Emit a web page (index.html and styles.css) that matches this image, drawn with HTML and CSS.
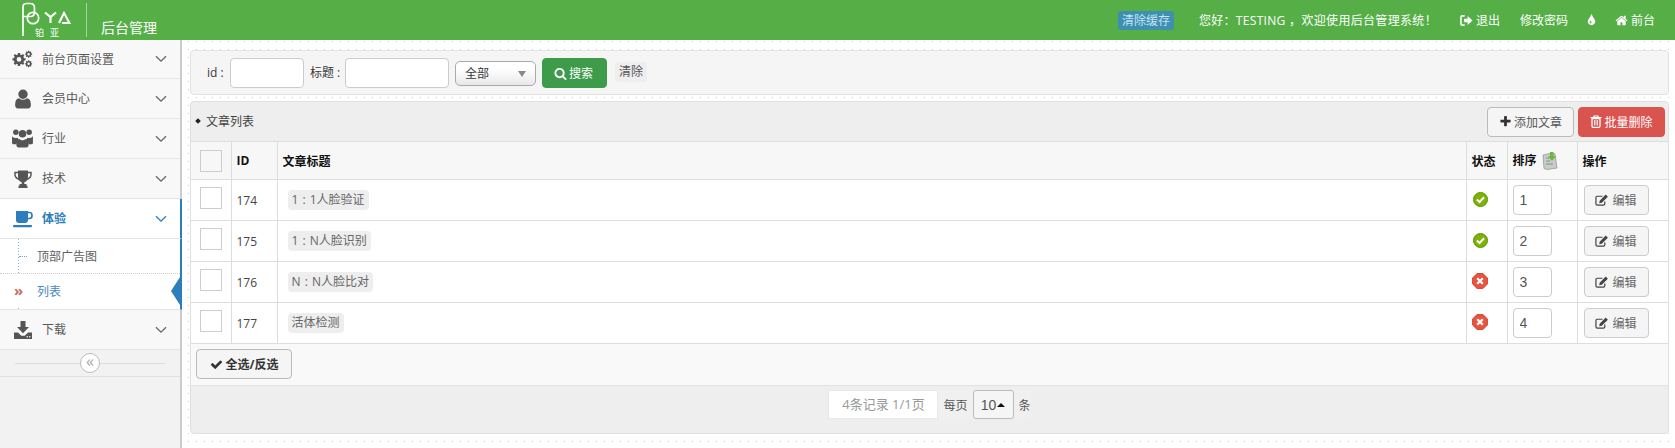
FILE: index.html
```html
<!DOCTYPE html>
<html>
<head>
<meta charset="utf-8">
<title>后台管理</title>
<link rel="stylesheet" href="styles.css">
</head>
<body>

<svg class="defs" width="0" height="0">
  <symbol id="i-home" viewBox="0 0 1792 1792"><path d="M1472 992v480q0 26-19 45t-45 19h-384v-384h-256v384h-384q-26 0-45-19t-19-45v-480q0-1 .5-3t.5-3l575-474 575 474q1 2 1 6zm223-69l-62 74q-8 9-21 11h-3q-13 0-21-7l-692-577-692 577q-12 8-24 7-13-2-21-11l-62-74q-8-10-7-23.500t11-21.500l719-599q32-26 76-26t76 26l244 204v-195q0-14 9-23t23-9h192q14 0 23 9t9 23v408l219 182q10 8 11 21.500t-7 23.500z"/></symbol>
  <symbol id="i-user" viewBox="0 0 1792 1792"><path d="M1536 1399q0 109-62.500 187t-150.500 78h-854q-88 0-150.500-78t-62.500-187q0-85 8.500-160.500t31.500-152 58.500-131 94-89 134.500-34.500q131 128 313 128t313-128q76 0 134.500 34.500t94 89 58.500 131 31.500 152 8.500 160.500zm-256-887q0 159-112.500 271.500t-271.500 112.500-271.500-112.500-112.500-271.500 112.500-271.500 271.500-112.500 271.500 112.500 112.500 271.500z"/></symbol>
  <symbol id="i-check" viewBox="0 0 1792 1792"><path d="M1671 566q0 40-28 68l-724 724-136 136q-28 28-68 28t-68-28l-136-136-362-362q-28-28-28-68t28-68l136-136q28-28 68-28t68 28l294 295 656-657q28-28 68-28t68 28l136 136q28 28 28 68z"/></symbol>
  <symbol id="i-plus" viewBox="0 0 1792 1792"><path d="M1600 736v192q0 40-28 68t-68 28h-416v416q0 40-28 68t-68 28h-192q-40 0-68-28t-28-68v-416h-416q-40 0-68-28t-28-68v-192q0-40 28-68t68-28h416v-416q0-40 28-68t68-28h192q40 0 68 28t28 68v416h416q40 0 68 28t28 68z"/></symbol>
  <symbol id="i-search" viewBox="0 0 1792 1792"><path d="M1216 832q0-185-131.500-316.500t-316.500-131.500-316.500 131.500-131.500 316.500 131.500 316.500 316.500 131.500 316.500-131.500 131.500-316.500zm512 832q0 52-38 90t-90 38q-54 0-90-38l-343-342q-179 124-399 124-143 0-273.500-55.500t-225-150-150-225-55.500-273.500 55.500-273.500 150-225 225-150 273.500-55.500 273.500 55.500 225 150 150 225 55.500 273.500q0 220-124 399l343 343q37 37 37 90z"/></symbol>
  <symbol id="i-tint" viewBox="0 0 1792 1792"><path d="M896 1152q0-36-20-69-1-1-15.500-22.500t-25.500-38-25-44-21-50.500q-4-16-21-16t-21 16q-7 23-21 50.500t-25 44-25.500 38-15.500 22.500q-20 33-20 69 0 53 37.500 90.500t90.500 37.500 90.500-37.500 37.500-90.500zm512-128q0 212-150 362t-362 150-362-150-150-362q0-145 81-275 6-9 62.500-90.500t101-151 99.500-178 83-201.500q9-30 34-47t51-17 51.500 17 33.500 47q28 93 83 201.500t99.500 178 101 151 62.500 90.500q81 127 81 275z"/></symbol>
  <symbol id="i-cogs" viewBox="0 0 24 20">
    <g fill="none" stroke="currentColor">
      <circle cx="8" cy="10.500" r="4.300" stroke-width="3.200"/>
      <path d="M8 3v3M8 15v3M.5 10.500h3M12.500 10.500h3M2.700 5.200l2.100 2.100M11.200 13.700l2.100 2.100M13.300 5.200l-2.100 2.100M4.800 13.700l-2.100 2.100" stroke-width="2.600"/>
      <circle cx="19" cy="4.500" r="2.300" stroke-width="1.700"/>
      <path d="M19 .5v1.500M19 7v1.500M15 4.500h1.500M21.500 4.500h1.500M16.200 1.700l1 1M20.800 6.300l1 1M21.800 1.700l-1 1M17.200 6.300l-1 1" stroke-width="1.400"/>
      <circle cx="19" cy="15.500" r="2.300" stroke-width="1.700"/>
      <path d="M19 11.500v1.500M19 18v1.500M15 15.500h1.500M21.500 15.500h1.500M16.200 12.700l1 1M20.800 17.300l1 1M21.800 12.700l-1 1M17.200 17.300l-1 1" stroke-width="1.400"/>
    </g>
  </symbol>
  <symbol id="i-users" viewBox="0 0 22 20">
    <circle cx="4" cy="3.500" r="2.900"/><circle cx="18" cy="3.500" r="2.900"/><circle cx="11" cy="5" r="4"/>
    <path d="M0 7.500q1.500 2 4 2 1 0 1.800-.4.700 1.800 2 2.700-2.800 1-3.300 4.200H1q-1 0-1-1.500zM22 7.500q-1.500 2-4 2-1 0-1.800-.4-.7 1.800-2 2.700 2.800 1 3.300 4.200H21q1 0 1-1.500z"/>
    <path d="M7.500 10.500q3.500 2.500 7 0 3 .7 3 5.500 0 3.500-2.500 3.500H7q-2.500 0-2.500-3.500 0-4.800 3-5.500z"/>
  </symbol>
  <symbol id="i-trophy" viewBox="0 0 18 18">
    <path d="M4 .5h10v6q0 4.500-3.700 5.800V14h2.200v1.800h1V18H4.500v-2.200h1V14h2.200v-1.700Q4 11 4 6.500z"/>
    <path d="M4 2.500H1v2q0 3.500 4.500 5M14 2.500h3v2q0 3.500-4.500 5" fill="none" stroke="currentColor" stroke-width="1.500"/>
  </symbol>
  <symbol id="i-coffee" viewBox="0 0 20 18">
    <path d="M3 1h12v9q0 3-3 3H6q-3 0-3-3z"/>
    <path d="M15 2.500h1.500q2.500 0 2.500 3t-2.500 3H15" fill="none" stroke="currentColor" stroke-width="1.700"/>
    <rect x="0" y="15" width="19" height="2.200" rx="1"/>
  </symbol>
  <symbol id="i-download" viewBox="0 0 18 18">
    <path d="M6.500 0h5v6h3.500l-6 6.300L3 6h3.500z"/>
    <path d="M0 11.500h4l3.300 3.300h3.400l3.300-3.300h4V18H0z"/>
    <circle cx="13.300" cy="15.800" r=".8" fill="#f8f8f8"/><circle cx="15.800" cy="15.800" r=".8" fill="#f8f8f8"/>
  </symbol>
  <symbol id="i-signout" viewBox="0 0 14 12">
    <path d="M5 1H2.500Q1 1 1 2.500v7Q1 11 2.500 11H5" fill="none" stroke="currentColor" stroke-width="1.700"/>
    <path d="M4.500 4h3.700V1.200L13.500 6 8.200 10.800V8H4.500z"/>
  </symbol>
  <symbol id="i-trash" viewBox="0 0 12 13">
    <path d="M.5 2.500h11M4 2.500V1h4v1.500" fill="none" stroke="currentColor" stroke-width="1.200"/>
    <path d="M2 3.500h8V11q0 1.300-1.300 1.300H3.300Q2 12.300 2 11z" fill="none" stroke="currentColor" stroke-width="1.300"/>
    <path d="M4.500 5v5.500M6 5v5.500M7.500 5v5.500" stroke="currentColor" stroke-width=".8"/>
  </symbol>
  <symbol id="i-edit" viewBox="0 0 15 13">
    <path d="M8 2.500H2.500Q1 2.500 1 4v6.500Q1 12 2.500 12h6.500q1.500 0 1.500-1.500V8" fill="none" stroke="currentColor" stroke-width="1.300"/>
    <path d="M5 7.200 11.500.7l2.300 2.300-6.500 6.500-2.800.5z"/>
  </symbol>
  <symbol id="i-chevron" viewBox="0 0 12 8"><path d="M1 1.200 6 6.200l5-5" fill="none" stroke="currentColor" stroke-width="1.300"/></symbol>
  <symbol id="i-yes" viewBox="0 0 15 15">
    <circle cx="7.500" cy="7.500" r="7" fill="#7cb305" stroke="#5d9400"/>
    <path d="M3.900 7.600 6.500 10l4.600-4.800" fill="none" stroke="#fff" stroke-width="2"/>
  </symbol>
  <symbol id="i-no" viewBox="0 0 16 16">
    <path d="M5 .6h6L15.400 5v6L11 15.400H5L.6 11V5z" fill="#e8543f" stroke="#d14531"/>
    <path d="M5.200 5.200l5.600 5.600M10.800 5.200l-5.600 5.600" stroke="#fff" stroke-width="2.300"/>
  </symbol>
</svg>

<div class="topbar">
  <div class="brand">
    <svg class="logo" width="50" height="38" viewBox="0 0 50 38">
      <g fill="none" stroke="#fff">
        <path d="M2 35V6Q2 2.500 5.500 2.500h3.500q4.500 0 4.500 4.500v4q0 4.500-4 4.500H2" stroke-width="1.700"/>
        <circle cx="12" cy="17" r="5.700" stroke-width="1.700"/>
        <path d="M24 11.500l5.500 4.500 5.500-4.500M29.500 16v6" stroke-width="2.200"/>
        <path d="M38 22 43 12l5.500 10H41" stroke-width="2"/>
      </g>
      <text class="logo-cn" x="14" y="34.500">铂</text>
      <text class="logo-cn" x="29" y="34.500">亚</text>
    </svg>
    <span class="brand-line"></span>
    <span class="brand-name">后台管理</span>
  </div>
  <div class="topnav">
    <a class="cache">清除缓存</a>
    <span class="hello">您好：TESTING ，欢迎使用后台管理系统！</span>
    <a class="navlink nav-out"><svg class="ico-13"><use href="#i-signout"/></svg>退出</a>
    <a class="navlink nav-near">修改密码</a>
    <a class="navlink nav-near"><svg class="ico-13"><use href="#i-tint"/></svg></a>
    <a class="navlink nav-home"><svg class="ico-13"><use href="#i-home"/></svg>前台</a>
  </div>
</div>

<div class="layout">
  <div class="sidebar">
    <div class="menu-item"><span class="menu-ico"><svg class="cogs"><use href="#i-cogs"/></svg></span><span class="menu-text">前台页面设置</span><svg class="chev"><use href="#i-chevron"/></svg></div>
    <div class="menu-item"><span class="menu-ico"><svg class="big"><use href="#i-user"/></svg></span><span class="menu-text">会员中心</span><svg class="chev"><use href="#i-chevron"/></svg></div>
    <div class="menu-item"><span class="menu-ico"><svg class="users"><use href="#i-users"/></svg></span><span class="menu-text">行业</span><svg class="chev"><use href="#i-chevron"/></svg></div>
    <div class="menu-item"><span class="menu-ico"><svg class="trophy"><use href="#i-trophy"/></svg></span><span class="menu-text">技术</span><svg class="chev"><use href="#i-chevron"/></svg></div>
    <div class="menu-item active"><span class="menu-ico"><svg class="coffee"><use href="#i-coffee"/></svg></span><span class="menu-text">体验</span><svg class="chev"><use href="#i-chevron"/></svg></div>
    <div class="submenu">
      <div class="sub-item">顶部广告图</div>
      <div class="sub-item current">列表</div>
    </div>
    <div class="menu-item"><span class="menu-ico"><svg class="trophy"><use href="#i-download"/></svg></span><span class="menu-text">下载</span><svg class="chev"><use href="#i-chevron"/></svg></div>
    <div class="collapse"><span class="collapse-btn">«</span></div>
  </div>

  <div class="main">
    <form class="search-panel">
      <label class="lab-id">id :</label>
      <input class="inp inp-id" type="text">
      <label class="lab-title">标题 :</label>
      <input class="inp inp-title" type="text">
      <div class="select">全部</div>
      <button class="btn btn-green" type="button"><svg class="ico-13"><use href="#i-search"/></svg>搜索</button>
      <a class="tag clear">清除</a>
    </form>

    <div class="list-panel">
      <div class="list-head">
        <span class="list-title"><i class="diamond"></i>文章列表</span>
        <div class="list-actions">
          <button class="btn btn-default btn-add" type="button"><svg class="ico-13"><use href="#i-plus"/></svg>添加文章</button>
          <button class="btn btn-red" type="button"><svg class="ico-12"><use href="#i-trash"/></svg>批量删除</button>
        </div>
      </div>
      <table class="grid">
        <colgroup>
          <col class="c-check"><col class="c-id"><col><col class="c-state"><col class="c-order"><col class="c-act">
        </colgroup>
        <thead>
          <tr>
            <th class="cell-check"><input type="checkbox"></th>
            <th>ID</th>
            <th>文章标题</th>
            <th>状态</th>
            <th>排序<svg class="save" viewBox="0 0 16 18"><path d="M1 3l9-2 3 1 2 14-10 1.500-3-1z" fill="#c9cdc9" stroke="#8b918b" stroke-width=".7"/><path d="M4 6h5M4 9h4M4 12h7" stroke="#7b807b" stroke-width=".8"/><path d="M8 0h3.500v4H14l-4 5-4-5h2z" fill="#6cb83a"/></svg></th>
            <th>操作</th>
          </tr>
        </thead>
        <tbody>
          <tr>
            <td class="cell-check"><input type="checkbox"></td>
            <td>174</td>
            <td><span class="tag">1 : 1人脸验证</span></td>
            <td class="cell-state"><svg class="state"><use href="#i-yes"/></svg></td>
            <td><input class="inp inp-order" type="text" value="1"></td>
            <td><button class="btn btn-edit" type="button"><svg class="ico-14"><use href="#i-edit"/></svg>编辑</button></td>
          </tr>
          <tr>
            <td class="cell-check"><input type="checkbox"></td>
            <td>175</td>
            <td><span class="tag">1 : N人脸识别</span></td>
            <td class="cell-state"><svg class="state"><use href="#i-yes"/></svg></td>
            <td><input class="inp inp-order" type="text" value="2"></td>
            <td><button class="btn btn-edit" type="button"><svg class="ico-14"><use href="#i-edit"/></svg>编辑</button></td>
          </tr>
          <tr>
            <td class="cell-check"><input type="checkbox"></td>
            <td>176</td>
            <td><span class="tag">N : N人脸比对</span></td>
            <td class="cell-state"><svg class="state no"><use href="#i-no"/></svg></td>
            <td><input class="inp inp-order" type="text" value="3"></td>
            <td><button class="btn btn-edit" type="button"><svg class="ico-14"><use href="#i-edit"/></svg>编辑</button></td>
          </tr>
          <tr>
            <td class="cell-check"><input type="checkbox"></td>
            <td>177</td>
            <td><span class="tag">活体检测</span></td>
            <td class="cell-state"><svg class="state no"><use href="#i-no"/></svg></td>
            <td><input class="inp inp-order" type="text" value="4"></td>
            <td><button class="btn btn-edit" type="button"><svg class="ico-14"><use href="#i-edit"/></svg>编辑</button></td>
          </tr>
        </tbody>
      </table>
      <div class="select-row">
        <button class="btn btn-default btn-all" type="button"><svg class="ico-13"><use href="#i-check"/></svg>全选/反选</button>
      </div>
      <div class="pager">
        <span class="pager-info">4条记录 1/1页</span>
        <span class="pager-size">
          <span>每页</span>
          <span class="pager-num">10<i class="caret"></i></span>
          <span>条</span>
        </span>
      </div>
    </div>
  </div>
</div>

</body>
</html>
```

FILE: styles.css
```css
* {
  box-sizing: border-box;
}

body {
  margin: 0;
  height: 448px;
  overflow: hidden;
  font-family: "Open Sans", "Noto Sans CJK SC", sans-serif;
  font-size: 12px;
  color: #393939;
  background-color: #fff;
}

svg {
  fill: currentColor;
}

.defs {
  position: absolute;
}

/* top bar */
.topbar {
  display: flex;
  justify-content: space-between;
  align-items: center;
  height: 40px;
  background-color: #55af46;
  color: #fff;
}

.brand {
  display: flex;
  align-items: center;
  padding-left: 21px;
}

.logo {
  display: block;
}

.logo-cn {
  font-size: 9px;
  fill: #fff;
}

.brand-line {
  width: 1px;
  height: 34px;
  margin-left: 15px;
  background-color: #a5d69c;
}

.brand-name {
  margin-left: 14px;
  padding-top: 13px;
  font-size: 14px;
}

.topnav {
  display: flex;
  align-items: center;
  padding-right: 20px;
}

.cache {
  padding: 0 4px;
  height: 19px;
  line-height: 19px;
  border-radius: 3px;
  color: #c4e3f7;
  background-color: #3e8fb0;
}

.hello {
  margin-left: 25px;
  margin-right: 23px;
  letter-spacing: 0.32px;
}

.navlink {
  display: flex;
  align-items: center;
  gap: 3px;
}

.nav-out {
  margin-right: 20px;
}

.nav-near {
  margin-right: 17px;
}

.ico-12 {
  width: 12px;
  height: 13px;
}

.ico-13 {
  width: 13px;
  height: 13px;
}

.ico-14 {
  width: 14px;
  height: 14px;
}

/* layout */
.layout {
  display: flex;
  height: 408px;
}

.sidebar {
  flex: none;
  width: 182px;
  border-right: 2px solid #ccc;
  background-color: #f2f2f2;
}

.menu-item {
  display: flex;
  align-items: center;
  height: 40px;
  border-bottom: 1px solid #e5e5e5;
  background-color: #f8f8f8;
  color: #585858;
}

.menu-item:first-child {
  height: 39px;
}

.menu-ico {
  display: flex;
  justify-content: center;
  width: 44px;
  padding-left: 1px;
  color: #555;
}

.cogs {
  width: 21px;
  height: 18px;
}

.big {
  width: 22px;
  height: 22px;
}

.users {
  width: 21px;
  height: 19px;
}

.trophy {
  width: 18px;
  height: 18px;
}

.coffee {
  width: 20px;
  height: 18px;
}

.menu-text {
  flex: 1;
  margin-left: -2px;
  padding-bottom: 1px;
}

.chev {
  width: 12px;
  height: 8px;
  margin-right: 13px;
  color: #666;
}

.menu-item.active {
  position: relative;
  margin-right: -2px;
  border-right: 2px solid #2b7dbc;
  background-color: #fff;
  color: #2b7dbc;
  font-weight: bold;
}

.menu-item.active .menu-ico {
  color: #2b7dbc;
}

.menu-item.active .chev {
  margin-right: 13px;
  color: #2b7dbc;
}

.menu-item.active .menu-text {
  font-weight: bold;
}

.submenu {
  margin-right: -2px;
  border-right: 2px solid #2b7dbc;
  border-bottom: 1px solid #e5e5e5;
  background-color: #fff;
  background-image: linear-gradient(to bottom, #8db7d8 50%, transparent 50%);
  background-size: 1px 3px;
  background-position: 18px 0;
  background-repeat: repeat-y;
}

.sub-item {
  position: relative;
  height: 35px;
  padding-left: 37px;
  line-height: 35px;
  color: #616161;
  border-bottom: 1px dotted #ccc;
}

.sub-item:before {
  content: "";
  position: absolute;
  left: 19px;
  top: 17px;
  width: 8px;
  border-top: 1px dotted #6d9fc9;
}

.sub-item.current {
  height: 35px;
  border-bottom: none;
  color: #4b88c4;
}

.sub-item.current:before {
  content: "»";
  left: 14px;
  top: 0;
  width: auto;
  border: none;
  background-color: #fff;
  font-size: 15px;
  font-weight: bold;
  line-height: 32px;
  color: #c86c5c;
}

.sub-item.current:after {
  content: "";
  position: absolute;
  right: 0;
  top: 3px;
  border-style: solid;
  border-width: 14px 9px 14px 0;
  border-color: transparent #2b7dbc transparent transparent;
}

.collapse {
  position: relative;
  display: flex;
  justify-content: center;
  align-items: center;
  height: 27px;
  border-bottom: 1px solid #e0e0e0;
}

.collapse:before {
  content: "";
  position: absolute;
  left: 15px;
  right: 15px;
  top: 13px;
  border-top: 1px solid #ddd;
}

.collapse-btn {
  position: relative;
  width: 20px;
  height: 20px;
  border: 1px solid #bbb;
  border-radius: 50%;
  background-color: #fff;
  color: #aaa;
  font-size: 16px;
  line-height: 15px;
  text-align: center;
}

/* main area */
.main {
  flex: 1;
  padding: 10px 6px 0 8px;
  background-image: radial-gradient(circle at 6.5px 1.5px, #ccc 0.7px, transparent 0.9px);
  background-size: 8px 8px;
}

.search-panel {
  display: flex;
  align-items: center;
  height: 45px;
  margin-bottom: 6px;
  padding: 1px 0 0 16px;
  border: 1px solid #e2e2e2;
  border-radius: 4px;
  background-color: #f5f5f5;
}

.inp {
  height: 30px;
  padding: 0 6px;
  border: 1px solid #ccc;
  border-radius: 4px;
  background-color: #fff;
  font-family: "Liberation Sans", sans-serif;
  font-size: 14px;
  color: #555;
}

.lab-id {
  width: 23px;
  padding-bottom: 2px;
}

.inp-id {
  width: 74px;
}

.lab-title {
  margin-left: 6px;
  width: 35px;
  padding-bottom: 2px;
}

.inp-title {
  width: 104px;
}

.select {
  position: relative;
  width: 81px;
  height: 25px;
  margin-left: 6px;
  padding-left: 9px;
  line-height: 23px;
  font-size: 12px;
  border: 1px solid #aaa;
  border-radius: 5px;
  background-image: linear-gradient(to bottom, #fff 30%, #e8e8e8);
}

.select:after {
  content: "";
  position: absolute;
  right: 9px;
  top: 9px;
  border-style: solid;
  border-width: 6px 4px 0 4px;
  border-color: #888 transparent transparent transparent;
}

.btn {
  display: inline-flex;
  justify-content: center;
  align-items: center;
  gap: 3px;
  height: 30px;
  padding: 0;
  border-radius: 4px;
  font-family: inherit;
  font-size: 12px;
  cursor: pointer;
}

.btn-green {
  gap: 2px;
  width: 65px;
  margin-left: 6px;
  padding-right: 2px;
  border: 1px solid #3d9b4a;
  background-color: #3d9b4a;
  color: #fff;
}

.tag {
  display: inline-block;
  height: 20px;
  padding: 0 4px;
  line-height: 20px;
  border-radius: 4px;
  background-color: #eee;
  color: #666;
  word-spacing: 1px;
}

.clear {
  margin-left: 8px;
  margin-bottom: 2px;
  color: #555;
}

.list-panel {
  height: 333px;
  border: 1px solid #e0e0e0;
  border-radius: 4px;
  background-color: #eee;
}

.list-head {
  display: flex;
  justify-content: space-between;
  align-items: center;
  height: 39px;
  padding: 0 3px 0 5px;
}

.list-title {
  display: flex;
  align-items: center;
  gap: 6px;
  padding-bottom: 2px;
  color: #444;
}

.diamond {
  width: 4px;
  height: 4px;
  background-color: #222;
  transform: rotate(45deg);
}

.list-actions {
  display: flex;
  gap: 4px;
}

.btn-default {
  border: 1px solid #bbb;
  background-color: #f5f5f5;
  color: #555;
}

.btn-add {
  gap: 2px;
  width: 87px;
}

.btn-add svg {
  color: #333;
}

.btn-red {
  gap: 2px;
  width: 87px;
  border: 1px solid #d9534f;
  background-color: #d9534f;
  color: #fff;
}

.grid {
  width: 100%;
  table-layout: fixed;
  border-collapse: collapse;
  background-color: #fff;
}

.c-check {
  width: 40px;
}

.c-id {
  width: 46px;
}

.c-state {
  width: 41px;
}

.c-order {
  width: 70px;
}

.c-act {
  width: 91px;
}

.grid th,
.grid td {
  height: 41px;
  padding: 0 5px;
  border: 1px solid #ddd;
  text-align: left;
  color: #444;
}

.grid th {
  height: 38px;
  background-color: #f7f7f7;
  font-weight: bold;
  color: #111;
}

.grid tr > :first-child {
  border-left: none;
}

.grid tr > :last-child {
  border-right: none;
}

.grid td .tag {
  margin-left: 5px;
}

.grid input[type=checkbox] {
  display: block;
  width: 22px;
  height: 22px;
  margin: 0 0 4px 4px;
  appearance: none;
  border: 1px solid #d0ccc8;
  background-color: #fff;
}

.grid th input[type=checkbox] {
  margin-bottom: 0;
  background-color: #f7f7f7;
}

.cell-state {
  text-align: center;
}

.state {
  display: block;
  width: 15px;
  height: 15px;
  margin: 0 0 2px 1px;
}

.state.no {
  width: 16px;
  height: 16px;
  margin-left: 0;
}

.save {
  width: 16px;
  height: 18px;
  margin-left: 5px;
  vertical-align: middle;
}

.inp-order {
  display: block;
  width: 39px;
  font-size: 14px;
}

.btn-edit {
  width: 65px;
  margin-left: 1px;
  border: 1px solid #ccc;
  background-color: #f5f5f5;
  color: #666;
}

.btn-edit svg {
  color: #444;
}

.select-row {
  height: 41px;
  padding: 5px 0 0 5px;
  background-color: #f9f9f9;
}

.btn-all {
  width: 96px;
  color: #333;
  font-weight: bold;
}

.pager {
  display: flex;
  justify-content: center;
  padding-top: 4px;
  border-top: 1px solid #e2e2e2;
}

.pager-info {
  width: 110px;
  height: 29px;
  line-height: 27px;
  font-size: 13px;
  text-align: center;
  background-color: #fff;
  border: 1px solid #e8e8e8;
  color: #999;
}

.pager-size {
  display: flex;
  align-items: center;
  gap: 5px;
  height: 29px;
  padding-left: 5px;
  background-color: #f0f0f0;
  color: #555;
}

.pager-num {
  display: flex;
  align-items: center;
  justify-content: center;
  gap: 1px;
  width: 41px;
  height: 29px;
  border: 1px solid #bbb;
  border-radius: 3px;
  background-color: #f5f5f5;
  font-family: "Liberation Sans", sans-serif;
  font-size: 14px;
  color: #555;
}

.caret {
  border-style: solid;
  border-width: 0 4px 4px 4px;
  border-color: transparent transparent #111 transparent;
}
```
